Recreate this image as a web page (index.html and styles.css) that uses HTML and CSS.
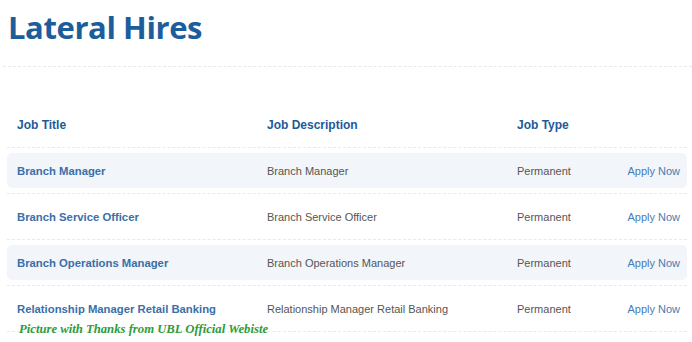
FILE: index.html
```html
<!DOCTYPE html>
<html>
<head>
<meta charset="utf-8">
<link rel="stylesheet" href="styles.css">
</head>
<body>
<div class="page">
  <h1 class="title">Lateral Hires</h1>
  <div class="rule"></div>
  <div class="jobs">
    <div class="item">
      <div class="row head">
        <div class="cell">Job Title</div>
        <div class="cell">Job Description</div>
        <div class="cell">Job Type</div>
        <div class="cell"></div>
      </div>
    </div>
    <div class="item">
      <div class="row alt">
        <div class="cell name">Branch Manager</div>
        <div class="cell">Branch Manager</div>
        <div class="cell">Permanent</div>
        <div class="cell apply">Apply Now</div>
      </div>
    </div>
    <div class="item">
      <div class="row">
        <div class="cell name">Branch Service Officer</div>
        <div class="cell">Branch Service Officer</div>
        <div class="cell">Permanent</div>
        <div class="cell apply">Apply Now</div>
      </div>
    </div>
    <div class="item">
      <div class="row alt">
        <div class="cell name">Branch Operations Manager</div>
        <div class="cell">Branch Operations Manager</div>
        <div class="cell">Permanent</div>
        <div class="cell apply">Apply Now</div>
      </div>
    </div>
    <div class="item">
      <div class="row">
        <div class="cell name">Relationship Manager Retail Banking</div>
        <div class="cell">Relationship Manager Retail Banking</div>
        <div class="cell">Permanent</div>
        <div class="cell apply">Apply Now</div>
      </div>
    </div>
  </div>
  <div class="credit">Picture with Thanks from UBL Official Webiste</div>
</div>
</body>
</html>
```

FILE: styles.css
```css
html, body {
  margin: 0;
  padding: 0;
  background: #ffffff;
}
.page {
  position: relative;
  width: 692px;
  height: 342px;
  overflow: hidden;
  font-family: "Liberation Sans", Arial, sans-serif;
}
.title {
  margin: 0;
  padding: 4px 0 0 8px;
  height: 44px;
  font-family: "Open Sans", sans-serif;
  font-weight: 700;
  font-size: 31px;
  line-height: 46px;
  color: #1c5d9b;
  letter-spacing: -0.4px;
}
.rule {
  margin: 18px 0 0 3px;
  border-top: 1px dashed #e6e9ee;
}
.jobs {
  display: flex;
  flex-direction: column;
  margin: 35px 0 0 7px;
  width: 680px;
}
.item {
  padding: 5px 0;
  border-bottom: 1px dashed #e6e9ee;
}
.row {
  display: grid;
  grid-template-columns: 250px 250px 1fr auto;
  align-items: center;
  height: 35px;
  padding: 0 7px 0 10px;
  border-radius: 5px;
  font-size: 11px;
  color: #555555;
}
.row.alt {
  background: #f2f5fa;
}
.head {
  font-size: 12px;
  font-weight: 700;
  color: #21599a;
}
.name {
  font-size: 11.3px;
  font-weight: 700;
  color: #3a6fa8;
}
.apply {
  color: #4a7bb3;
  text-align: right;
}
.credit {
  position: absolute;
  left: 19px;
  top: 322px;
  font-family: "Liberation Serif", serif;
  font-style: italic;
  font-weight: 700;
  font-size: 12.7px;
  color: #2d9c3c;
}
```
